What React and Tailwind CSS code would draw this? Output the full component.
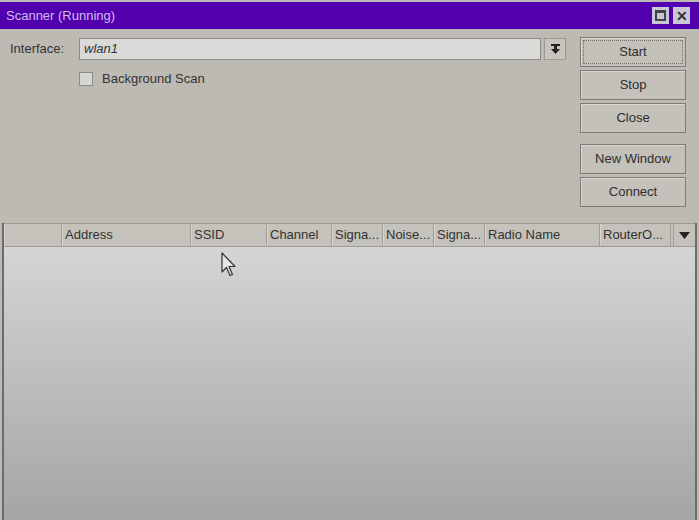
import React from 'react';

const columns = [
  { label: '', w: 'w-[58px]' },
  { label: 'Address', w: 'w-[129px]' },
  { label: 'SSID', w: 'w-[76px]' },
  { label: 'Channel', w: 'w-[65px]' },
  { label: 'Signa...', w: 'w-[51px]' },
  { label: 'Noise...', w: 'w-[51px]' },
  { label: 'Signa...', w: 'w-[51px]' },
  { label: 'Radio Name', w: 'w-[115px]' },
  { label: 'RouterO...', w: 'w-[71px]' },
];

function SideButton({ label, focused }) {
  return (
    <button className="h-[30px] w-[106px] border border-[#7d7b76] bg-[#c3c1ba] p-[2px] text-[13px] text-[#2e2e2e] shadow-[inset_1px_1px_0_#dad8d2]">
      <span className={`flex h-full w-full items-center justify-center ${focused ? 'border border-dotted border-[#6f6d68]' : ''}`}>{label}</span>
    </button>
  );
}

export default function App() {
  return (
    <div className="relative flex h-[520px] w-[699px] flex-col overflow-hidden bg-[#bdbab3] font-['Liberation_Sans',Arial,sans-serif]">
      {/* title bar */}
      <div className="mt-[2px] flex h-[27px] items-center justify-between bg-[#5200ad] pl-[6px] pr-[9px]">
        <span className="text-[13px] text-[#cdbdf5]">Scanner (Running)</span>
        <div className="flex gap-[4px]">
          <div className="flex h-[17px] w-[17px] items-center justify-center bg-[#c9c6d8]">
            <div className="h-[11px] w-[11px] border-2 border-t-[3px] border-[#444]" />
          </div>
          <div className="flex h-[17px] w-[17px] items-center justify-center bg-[#c9c6d8] text-[14px] font-bold leading-none text-[#333]">✕</div>
        </div>
      </div>

      {/* form area */}
      <div className="flex h-[194px] pl-[10px] pr-[13px] pt-[9px]">
        <div className="flex-1">
          <div className="flex items-center">
            <span className="w-[69px] text-[13px] text-[#333]">Interface:</span>
            <div className="flex h-[22px] w-[462px] items-center border border-[#8d8b86] bg-[#d9d9d7] pl-[4px] text-[13px] italic text-[#333]">wlan1</div>
            <div className="ml-[3px] flex h-[22px] w-[22px] items-center justify-center border border-[#9c9a94] bg-[#c6c4bd]">
              <svg width="9" height="10" viewBox="0 0 9 10">
                <rect x="0" y="0" width="9" height="2" fill="#222" />
                <rect x="3" y="2" width="3" height="3" fill="#222" />
                <path d="M0 5 H9 L4.5 10 Z" fill="#222" />
              </svg>
            </div>
          </div>
          <div className="mt-[9px] flex items-center pl-[69px]">
            <div className="h-[14px] w-[14px] border border-[#8d8b86] bg-[#d6d6d4]" />
            <span className="ml-[9px] text-[13px] text-[#333]">Background Scan</span>
          </div>
        </div>
        <div className="flex flex-col">
          <div className="mt-[-1px] flex flex-col gap-[3px]">
            <SideButton label="Start" focused />
            <SideButton label="Stop" />
            <SideButton label="Close" />
          </div>
          <div className="mt-[11px] flex flex-col gap-[3px]">
            <SideButton label="New Window" />
            <SideButton label="Connect" />
          </div>
        </div>
      </div>

      {/* table */}
      <div className="mx-[2px] flex flex-1 flex-col border-l-2 border-r-2 border-[#6d6c69]">
        <div className="flex h-[24px] border-y border-[#9c9a95] bg-[#c4c2bb]">
          {columns.map((c, i) => (
            <div key={i} className={`${c.w} flex items-center overflow-hidden whitespace-nowrap border-r border-[#a09e98] pl-[3px] text-[13px] text-[#333] shadow-[inset_1px_0_0_#d6d4ce]`}>
              {c.label}
            </div>
          ))}
          <div className="ml-[2px] flex flex-1 items-center justify-center border-l border-[#a09e98]">
            <svg width="11" height="7" viewBox="0 0 11 7"><path d="M0 0 H11 L5.5 7 Z" fill="#222" /></svg>
          </div>
        </div>
        <div className="flex-1 bg-gradient-to-b from-[#d5d5d5] to-[#a5a5a5]" />
      </div>

      {/* mouse cursor */}
      <svg className="absolute left-[221px] top-[252px]" width="17" height="26" viewBox="0 0 17 26">
        <path d="M1 1 L1 20 L5.5 15.5 L9 23.5 L11.5 22.5 L8 14.5 L14 14.5 Z" fill="#e6e6e6" stroke="#333" strokeWidth="1.2" strokeLinejoin="round" />
      </svg>
    </div>
  );
}
